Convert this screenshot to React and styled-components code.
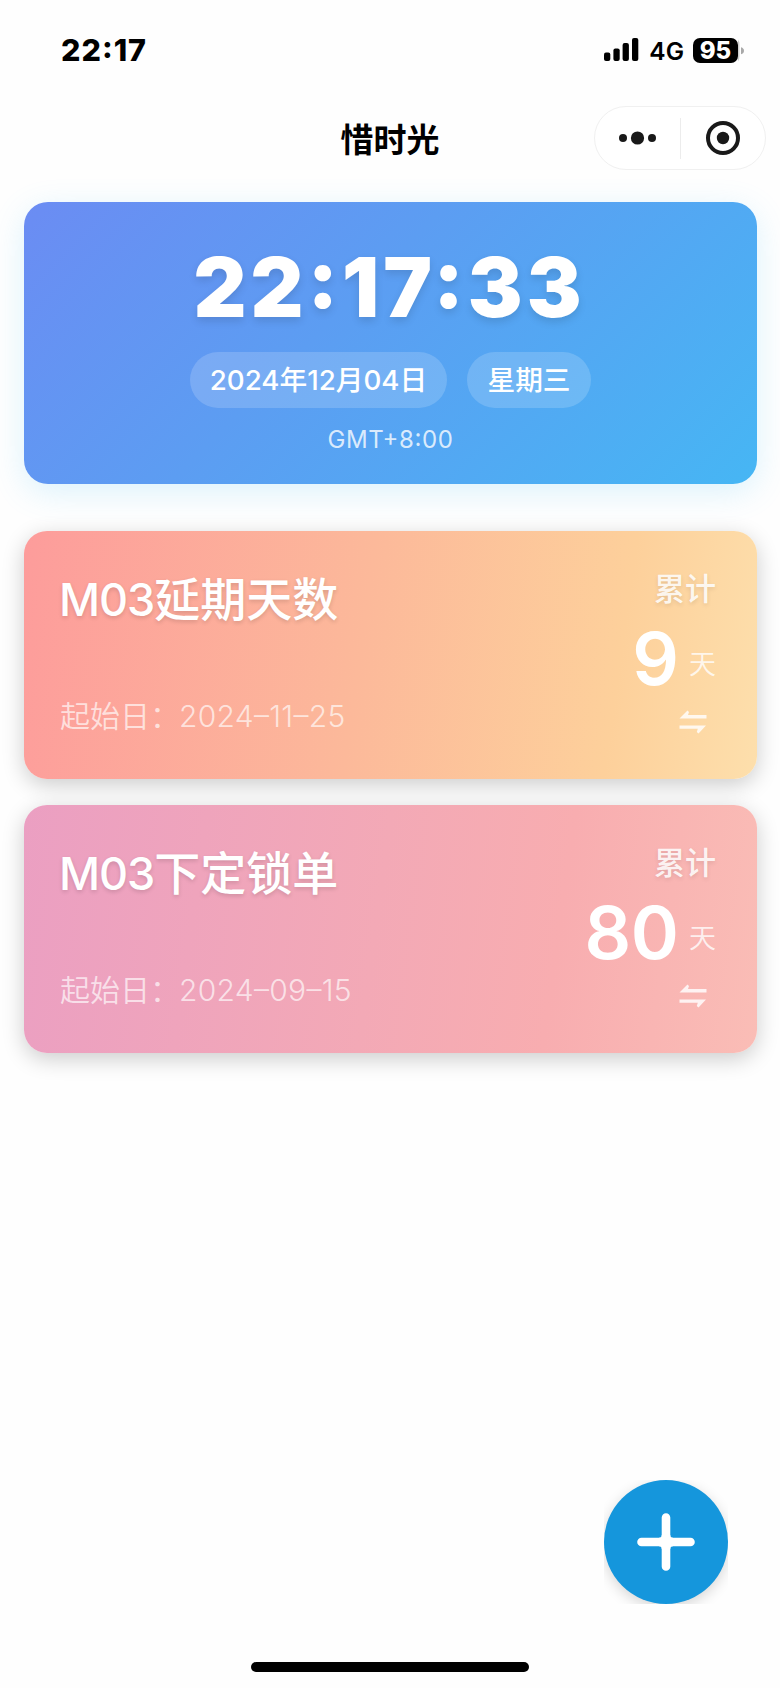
import styled, { createGlobalStyle } from 'styled-components';

const GlobalStyles = createGlobalStyle`
	* {
		box-sizing: border-box;
	}
	body {
		margin: 0;
		background: #fefefe;
		font-family: Inter, "Noto Sans CJK SC", sans-serif;
		font-feature-settings: "calt" 1;
	}
`;

const Screen = styled.div`
	position: relative;
	display: flex;
	flex-direction: column;
	width: 780px;
	height: 1688px;
	overflow: hidden;
	background: #fefefe;
`;

const StatusBar = styled.header`
	display: flex;
	justify-content: space-between;
	align-items: center;
	height: 100px;
	padding: 0 36px 0 61px;
	color: #000;
`;

const StatusTime = styled.span`
	font-size: 30.5px;
	font-weight: 800;
	line-height: 36px;
	letter-spacing: 1px;
`;

const StatusIcons = styled.div`
	display: flex;
	align-items: center;
	height: 26px;
`;

const Network = styled.span`
	margin: 1px 9px 0 10px;
	font-size: 24.5px;
	font-weight: 600;
	line-height: 26px;
`;

const Battery = styled.span`
	display: flex;
	justify-content: center;
	align-items: center;
	width: 45px;
	height: 25px;
	border-radius: 7px;
	background: #000;
	color: #fff;
	font-size: 24px;
	font-weight: 800;
	line-height: 25px;
`;

const NavBar = styled.nav`
	display: grid;
	grid-template-columns: 1fr auto 1fr;
	align-items: center;
	height: 76px;
	padding: 0 14px;
`;

const NavTitle = styled.h1`
	grid-column: 2;
	margin: 3px 0 0;
	font-size: 33px;
	font-weight: 700;
	line-height: 40px;
	color: #000;
`;

const Capsule = styled.div`
	display: flex;
	justify-self: end;
	align-items: center;
	width: 172px;
	height: 64px;
	border: 1px solid #f0f0f0;
	border-radius: 32px;
	background: #fff;
`;

const Cards = styled.main`
	display: flex;
	flex-direction: column;
	padding: 26px 23px 0 24px;
`;

const ClockCard = styled.section`
	display: flex;
	flex-direction: column;
	align-items: center;
	height: 282px;
	padding-top: 37px;
	margin-bottom: 47px;
	border-radius: 24px;
	background: linear-gradient(135deg, #6b8cf3 0%, #5c9df2 42%, #46b6f4 100%);
	box-shadow: 0 8px 32px rgba(79, 195, 247, 0.2);
	color: #fff;
`;

const ClockTime = styled.div`
	margin-right: 2px;
	font-size: 82px;
	font-weight: 900;
	line-height: 98px;
	letter-spacing: 4px;
	text-shadow: 0 4px 8px rgba(0, 0, 0, 0.12);
`;

const PillRow = styled.div`
	display: flex;
	gap: 20px;
	margin-top: 15px;
`;

const Pill = styled.span`
	display: flex;
	justify-content: center;
	width: ${(props) => props.$width}px;
	height: 56px;
	border-radius: 28px;
	background: rgba(255, 255, 255, 0.17);
	font-size: 27.7px;
	font-weight: 500;
	line-height: 56px;
	white-space: nowrap;
`;

const Zone = styled.div`
	margin-top: 17px;
	font-size: 24px;
	line-height: 29px;
	letter-spacing: 0.6px;
	color: rgba(255, 255, 255, 0.8);
`;

const DayCard = styled.article`
	display: flex;
	justify-content: space-between;
	height: 248px;
	padding: 40px 41px 0 36px;
	margin-bottom: 26px;
	border-radius: 23px;
	background: ${(props) => props.$background};
	box-shadow: 0 6px 22px rgba(0, 0, 0, 0.2);
	color: #fff;
`;

const CardInfo = styled.div`
	display: flex;
	flex-direction: column;
`;

const CardTitle = styled.h2`
	height: 56px;
	margin: 0 0 0 -1px;
	font-size: 46px;
	font-weight: 500;
	line-height: 56px;
	text-shadow: 0 2px 4px rgba(0, 0, 0, 0.14);
`;

const CardCode = styled.span`
	font-size: 45px;
	letter-spacing: -1px;
`;

const CardDate = styled.div`
	display: flex;
	margin-top: 71px;
	font-size: 30px;
	font-weight: 350;
	line-height: 36px;
	color: rgba(255, 255, 255, 0.68);
`;

const DateValue = styled.span`
	margin-left: -1px;
	letter-spacing: 0.3px;
`;

const CardCount = styled.div`
	display: flex;
	flex-direction: column;
	align-items: flex-end;
`;

const CountLabel = styled.span`
	font-size: 31px;
	font-weight: 500;
	line-height: 36px;
	color: rgba(255, 255, 255, 0.87);
	text-shadow: 0 2px 4px rgba(0, 0, 0, 0.1);
`;

const CountValue = styled.div`
	display: flex;
	align-items: center;
	height: 88px;
	margin-top: 8px;
`;

const CountNumber = styled.strong`
	font-size: 73px;
	font-weight: 600;
	line-height: 88px;
	letter-spacing: -0.5px;
`;

const CountUnit = styled.span`
	margin: 11px 0 0 10.5px;
	font-size: 27px;
	font-weight: 350;
	line-height: 32px;
	color: rgba(255, 255, 255, 0.8);
`;

const SwapIcon = styled.svg`
	margin: 7px 9px 0 0;
	fill: rgba(255, 255, 255, 0.82);
`;

const AddButton = styled.button`
	position: absolute;
	right: 52px;
	bottom: 84px;
	width: 124px;
	height: 124px;
	padding: 0;
	border: 0;
	overflow: hidden;
	background: none;
`;

const AddCircle = styled.span`
	display: flex;
	justify-content: center;
	align-items: center;
	width: 124px;
	height: 124px;
	border-radius: 50%;
	background: #1596dc;
	box-shadow: 0 4px 14px rgba(0, 0, 0, 0.16);
`;

const HomeIndicator = styled.div`
	align-self: center;
	width: 278px;
	height: 10px;
	margin: auto 0 16px;
	border-radius: 5px;
	background: #000;
`;

const days = [
	{
		code: 'M03',
		title: '延期天数',
		date: '2024–11–25',
		count: 9,
		background:
			'linear-gradient(98deg, #fd9c9b 0%, #fcb99a 46%, #fdd09b 80%, #fddfac 100%)',
	},
	{
		code: 'M03',
		title: '下定锁单',
		date: '2024–09–15',
		count: 80,
		background:
			'linear-gradient(98deg, #eb9fc2 0%, #f3a9b6 48%, #f8adb0 72%, #fabdb6 100%)',
	},
];

const SignalIcon = () => (
	<svg width="35" height="24" viewBox="0 0 35 24">
		<rect x="0" y="14.5" width="6.3" height="8.5" rx="2" />
		<rect x="9.4" y="10.5" width="6.3" height="12.5" rx="2" />
		<rect x="18.6" y="5" width="6.3" height="18" rx="2" />
		<rect x="28" y="0" width="6.3" height="23" rx="2" />
	</svg>
);

const BatteryTip = () => (
	<svg width="6" height="25" viewBox="0 0 6 25">
		<path d="M0 1.5Q1.5 3 1.5 7V18Q1.5 22 0 23.5Z" fill="#ccc" />
		<path d="M3 9.2Q6 10.2 6 12.7T3 16.2Z" fill="#a9a9a9" />
	</svg>
);

const CapsuleIcons = () => (
	<svg width="170" height="62" viewBox="0 0 170 62" fill="#191919">
		<circle cx="28" cy="31" r="4" />
		<circle cx="42.5" cy="31" r="6.6" />
		<circle cx="57" cy="31" r="4" />
		<path d="M85.5 11V52" stroke="#ececec" />
		<circle cx="128" cy="31" r="15" fill="none" stroke="#191919" strokeWidth="4" />
		<circle cx="128" cy="31" r="6.2" />
	</svg>
);

const DayItem = ({ code, title, date, count, background }) => (
	<DayCard $background={background}>
		<CardInfo>
			<CardTitle>
				<CardCode>{code}</CardCode>
				{title}
			</CardTitle>
			<CardDate>
				<span>起始日：</span>
				<DateValue>{date}</DateValue>
			</CardDate>
		</CardInfo>
		<CardCount>
			<CountLabel>累计</CountLabel>
			<CountValue>
				<CountNumber>{count}</CountNumber>
				<CountUnit>天</CountUnit>
			</CountValue>
			<SwapIcon width="28" height="24" viewBox="0 0 28 24">
				<path d="M0.5 8.5L8.5 0.5L10 2L9 5H27.5V8.5Z" />
				<path d="M0.5 15.5H27L19.5 23.5L17.8 22L18.8 18.8H0.5Z" />
			</SwapIcon>
		</CardCount>
	</DayCard>
);

const App = () => {
	return (
		<>
			<GlobalStyles />
			<Screen>
				<StatusBar>
					<StatusTime>22:17</StatusTime>
					<StatusIcons>
						<SignalIcon />
						<Network>4G</Network>
						<Battery>95</Battery>
						<BatteryTip />
					</StatusIcons>
				</StatusBar>
				<NavBar>
					<NavTitle>惜时光</NavTitle>
					<Capsule>
						<CapsuleIcons />
					</Capsule>
				</NavBar>
				<Cards>
					<ClockCard>
						<ClockTime>22:17:33</ClockTime>
						<PillRow>
							<Pill $width={257}>2024年12月04日</Pill>
							<Pill $width={124}>星期三</Pill>
						</PillRow>
						<Zone>GMT+8:00</Zone>
					</ClockCard>
					{days.map((day) => (
						<DayItem key={day.title} {...day} />
					))}
				</Cards>
				<AddButton aria-label="添加">
					<AddCircle>
						<svg width="58" height="58" viewBox="0 0 58 58">
							<path
								d="M29 4.5V53.5M4.5 29H53.5"
								stroke="#fff"
								strokeWidth="8.6"
								strokeLinecap="round"
							/>
							<path
								d="M22 24.7Q24.7 24.7 24.7 22H33.3Q33.3 24.7 36 24.7V33.3Q33.3 33.3 33.3 36H24.7Q24.7 33.3 22 33.3Z"
								fill="#fff"
							/>
						</svg>
					</AddCircle>
				</AddButton>
				<HomeIndicator />
			</Screen>
		</>
	);
};

export default App;
